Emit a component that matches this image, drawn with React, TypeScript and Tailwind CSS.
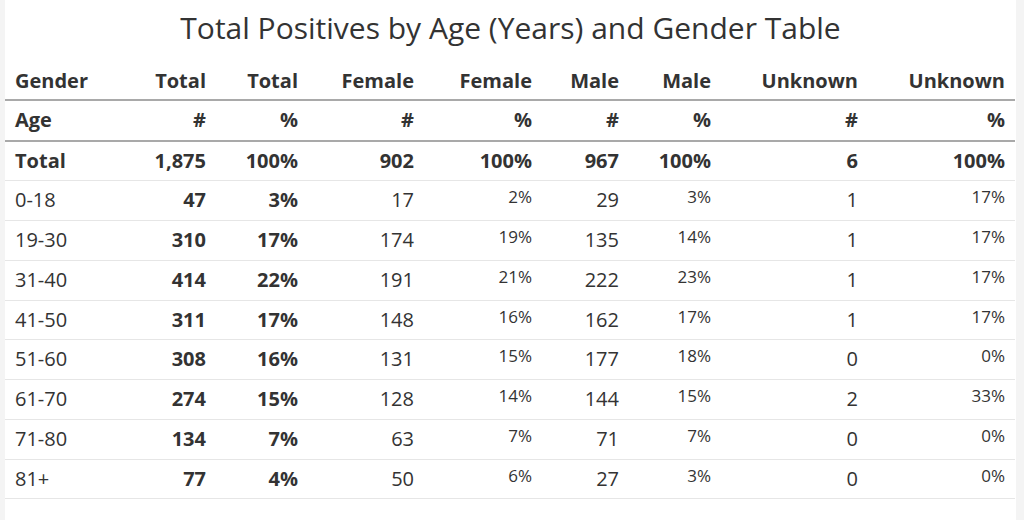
import React from "react";

type Row = {
  age: string;
  total: string;
  totalPct: string;
  female: string;
  femalePct: string;
  male: string;
  malePct: string;
  unknown: string;
  unknownPct: string;
};

const rows: Row[] = [
  { age: "0-18", total: "47", totalPct: "3%", female: "17", femalePct: "2%", male: "29", malePct: "3%", unknown: "1", unknownPct: "17%" },
  { age: "19-30", total: "310", totalPct: "17%", female: "174", femalePct: "19%", male: "135", malePct: "14%", unknown: "1", unknownPct: "17%" },
  { age: "31-40", total: "414", totalPct: "22%", female: "191", femalePct: "21%", male: "222", malePct: "23%", unknown: "1", unknownPct: "17%" },
  { age: "41-50", total: "311", totalPct: "17%", female: "148", femalePct: "16%", male: "162", malePct: "17%", unknown: "1", unknownPct: "17%" },
  { age: "51-60", total: "308", totalPct: "16%", female: "131", femalePct: "15%", male: "177", malePct: "18%", unknown: "0", unknownPct: "0%" },
  { age: "61-70", total: "274", totalPct: "15%", female: "128", femalePct: "14%", male: "144", malePct: "15%", unknown: "2", unknownPct: "33%" },
  { age: "71-80", total: "134", totalPct: "7%", female: "63", femalePct: "7%", male: "71", malePct: "7%", unknown: "0", unknownPct: "0%" },
  { age: "81+", total: "77", totalPct: "4%", female: "50", femalePct: "6%", male: "27", malePct: "3%", unknown: "0", unknownPct: "0%" },
];

const cell = "px-[10px] py-[5px] align-top leading-[28.75px]";
const head = `${cell} font-bold text-[20px]`;
const top = `${cell} pt-[7px] pb-[3px] font-bold text-[20px]`;
const small = "px-[10px] pt-[4px] pb-[5px] align-top leading-[24px] text-[17px] text-right";

export default function App() {
  return (
    <div
      className="min-h-[520px] w-[1024px] bg-[#f4f4f4] text-[#333]"
      style={{ fontFamily: '"Open Sans", "Liberation Sans", sans-serif' }}
    >
      <div className="ml-[5px] w-[1011px] min-h-[520px] bg-white">
        <h1 className="h-[60px] pt-[8px] text-center text-[30px] leading-[40px] font-normal">
          Total Positives by Age (Years) and Gender Table
        </h1>
        <table className="w-[1010px] table-fixed border-collapse">
          <colgroup>
            <col className="w-[120px]" />
            <col className="w-[91px]" />
            <col className="w-[92px]" />
            <col className="w-[116px]" />
            <col className="w-[118px]" />
            <col className="w-[87px]" />
            <col className="w-[92px]" />
            <col className="w-[147px]" />
            <col className="w-[147px]" />
          </colgroup>
          <thead>
            <tr className="border-b-2 border-[#a9a9a9]">
              <th className={`${top} text-left`}>Gender</th>
              <th className={`${top} text-right`}>Total</th>
              <th className={`${top} text-right`}>Total</th>
              <th className={`${top} text-right`}>Female</th>
              <th className={`${top} text-right`}>Female</th>
              <th className={`${top} text-right`}>Male</th>
              <th className={`${top} text-right`}>Male</th>
              <th className={`${top} text-right`}>Unknown</th>
              <th className={`${top} text-right`}>Unknown</th>
            </tr>
            <tr className="border-b-2 border-[#a9a9a9]">
              <th className={`${head} text-left`}>Age</th>
              <th className={`${head} text-right`}>#</th>
              <th className={`${head} text-right`}>%</th>
              <th className={`${head} text-right`}>#</th>
              <th className={`${head} text-right`}>%</th>
              <th className={`${head} text-right`}>#</th>
              <th className={`${head} text-right`}>%</th>
              <th className={`${head} text-right`}>#</th>
              <th className={`${head} text-right`}>%</th>
            </tr>
          </thead>
          <tbody>
            <tr className="border-b border-[#e6e6e6]">
              <td className={`${head} text-left`}>Total</td>
              <td className={`${head} text-right`}>1,875</td>
              <td className={`${head} text-right`}>100%</td>
              <td className={`${head} text-right`}>902</td>
              <td className={`${head} text-right`}>100%</td>
              <td className={`${head} text-right`}>967</td>
              <td className={`${head} text-right`}>100%</td>
              <td className={`${head} text-right`}>6</td>
              <td className={`${head} text-right`}>100%</td>
            </tr>
            {rows.map((r) => (
              <tr key={r.age} className="border-b border-[#e6e6e6]">
                <td className={`${cell} text-[20px] text-left`}>{r.age}</td>
                <td className={`${cell} text-[20px] font-bold text-right`}>{r.total}</td>
                <td className={`${cell} text-[20px] font-bold text-right`}>{r.totalPct}</td>
                <td className={`${cell} text-[20px] text-right`}>{r.female}</td>
                <td className={small}>{r.femalePct}</td>
                <td className={`${cell} text-[20px] text-right`}>{r.male}</td>
                <td className={small}>{r.malePct}</td>
                <td className={`${cell} text-[20px] text-right`}>{r.unknown}</td>
                <td className={small}>{r.unknownPct}</td>
              </tr>
            ))}
          </tbody>
        </table>
      </div>
    </div>
  );
}
